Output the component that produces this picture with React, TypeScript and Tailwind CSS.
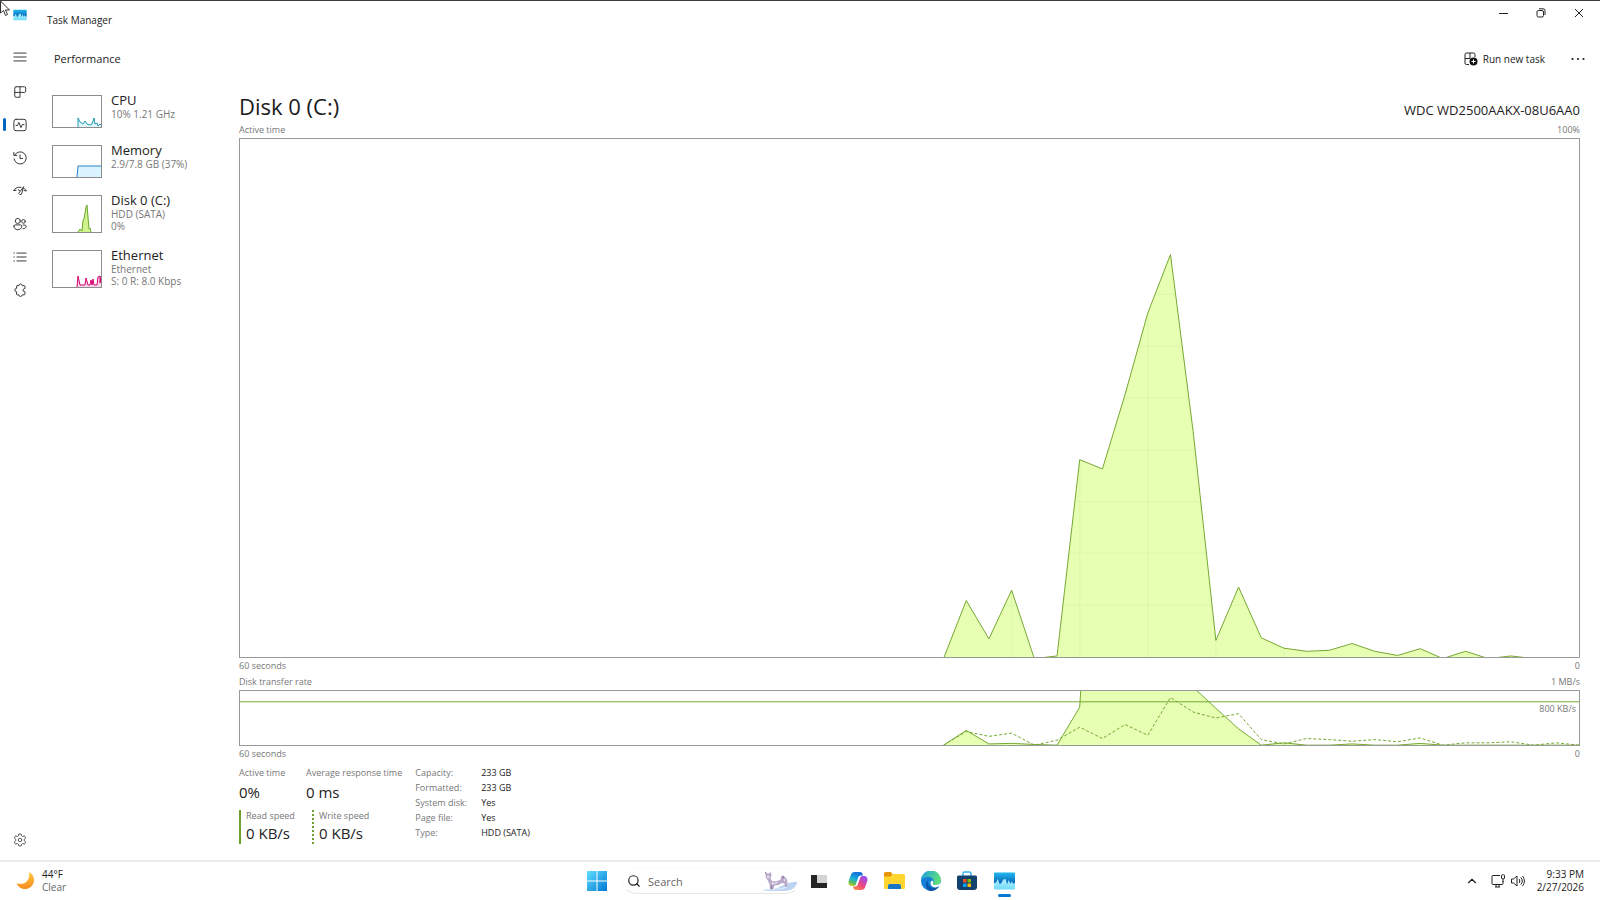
import { ChevronUp, Search } from "lucide-react";
import type { ReactNode } from "react";

// samples run from the oldest second (left) to the newest one (right)
const ACTIVE_TIME = [
  0, 10.9, 3.5, 12.9, 0, 0.2, 38.1, 36.3, 50.7, 66.4, 77.7, 43.5, 3.2, 13.5, 3.7, 1.7, 1.1, 1.3, 2.6, 1.1, 0.3, 1.6, 0,
  1.1, 0, 0.2, 0, 0, 0,
];
const READ_RATE = [
  0, 27, 2, 3, 1, 0, 70, 750, 900, 900, 600, 107, 68, 30, 0, 4, 0, 0, 2, 0, 0, 3, 0, 0, 0, 0, 0, 0, 0,
];
const WRITE_RATE = [
  0, 25, 16, 22, 0, 9, 33, 12, 38, 18, 88, 61, 50, 58, 10, 2, 12, 10, 7, 10, 6, 13, 0, 4, 4, 6, 0, 4, 0,
];

const GRID_ROWS = [10, 20, 30, 40, 50, 60, 70, 80, 90];
const GRID_COLUMNS = [31, 34, 37, 40, 43, 46];

// idle seconds go just below the frame so that no line is drawn for them
function toPoints(samples: number[]) {
  return samples.map((v, i) => `${59 - (samples.length - 1 - i)},${v === 0 ? 100.3 : 100 - v}`).join(" ");
}

function toArea(samples: number[]) {
  return `${60 - samples.length},101 ${toPoints(samples)} 59,101`;
}

interface AreaProps {
  samples: number[];
  dashed?: boolean;
  fill?: string;
}

function Area({ samples, dashed, fill = "#e6ffb3" }: AreaProps) {
  return (
    <>
      {!dashed && <polygon points={toArea(samples)} fill={fill} />}
      <polyline
        points={toPoints(samples)}
        fill="none"
        stroke="#76a832"
        strokeWidth="1"
        strokeDasharray={dashed ? "3 2" : undefined}
        vectorEffect="non-scaling-stroke"
      />
    </>
  );
}

function NavIcon({ children }: { children: ReactNode }) {
  return (
    <svg
      viewBox="0 0 16 16"
      className="h-[14px] w-[14px]"
      fill="none"
      stroke="currentColor"
      strokeWidth="1.1"
      strokeLinecap="round"
      strokeLinejoin="round"
    >
      {children}
    </svg>
  );
}

const NAV = [
  {
    label: "Processes",
    icon: (
      <path d="M3.500 2H13a1.500 1.500 0 0 1 1.500 1.500V7A1.500 1.500 0 0 1 13 8.500H2M8 2v12H3.500A1.500 1.500 0 0 1 2 12.500v-9A1.500 1.500 0 0 1 3.500 2" />
    ),
  },
  {
    label: "Performance",
    icon: (
      <>
        <rect x="1" y="1.500" width="14" height="13" rx="2.500" />
        <path d="M3.500 8.500h1.700L6.700 5l2.400 6 1.500-3.500h2" />
      </>
    ),
  },
  {
    label: "App history",
    icon: <path d="M2 4.500A7 7 0 1 1 1.200 9M1 1.500v3.500h3.500M8 4.500V8.500h3" />,
  },
  {
    label: "Startup apps",
    icon: (
      <path d="M1 7.500C2.500 4.500 5 3.300 9 3.800M1 7.500l2.500-.2M15 7.800c-.5-1.400-1.300-2.300-2.700-3M15 7.800l-2.300-.3M11.800 3.500L7.500 9.300a1.600 1.600 0 1 0 2.600 1.500zM6 6.500l1.500 1" />
    ),
  },
  {
    label: "Users",
    icon: (
      <>
        <circle cx="5.500" cy="4.500" r="2.900" />
        <circle cx="12" cy="5" r="2.100" />
        <path d="M1 10.500C1 9.700 1.700 9 2.500 9h6c.8 0 1.500.7 1.500 1.500 0 2.400-1.800 4-4.500 4s-4.500-1.600-4.500-4zM11.500 9.200h2c.8 0 1.500.6 1.500 1.400 0 1.800-1.300 2.800-3.500 2.800" />
      </>
    ),
  },
  {
    label: "Details",
    icon: <path d="M4.500 3.500H15M4.500 8H15M4.500 12.500H15M1 3.500h.6M1 8h.6M1 12.500h.6" />,
  },
  {
    label: "Services",
    icon: (
      <path d="M5 3h1.700a1.900 1.900 0 0 1 3.800 0h2.200a1 1 0 0 1 1 1v2.500h-.5a1.700 1.700 0 0 0 0 3.400h.5v2.600a1 1 0 0 1-1 1h-2.200a1.900 1.900 0 0 1-3.800 0H5a1 1 0 0 1-1-1V10a1.900 1.900 0 1 1 0-3.800V4a1 1 0 0 1 1-1z" />
    ),
  },
];

const DEVICES = [
  {
    name: "CPU",
    lines: ["10% 1.21 GHz"],
    stroke: "#1d9bb5",
    fill: "#e2f5f9",
    points: "26,32 26,23 28,27 31,29 33,26 35,29 38,30 40,29 42,23 43,29 45,28 46,31 48,29 49,30",
  },
  {
    name: "Memory",
    lines: ["2.9/7.8 GB (37%)"],
    stroke: "#2c80c4",
    fill: "#d9f4ff",
    points: "25,32 26,21 49,21",
  },
  {
    name: "Disk 0 (C:)",
    lines: ["HDD (SATA)", "0%"],
    stroke: "#69a82d",
    fill: "#d0f28c",
    points: "26,37 28,34 30,36 31,25 32,24 34,12 35,10 37,34 38,33 39,37",
  },
  {
    name: "Ethernet",
    lines: ["Ethernet", "S: 0 R: 8.0 Kbps"],
    stroke: "#d3006e",
    fill: "#fbd5e8",
    points: "25,37 26,26 28,35 32,35 33,35 34,28 36,35 38,35 39,30 40,35 41,29 42,35 45,35 46,27 48,26 48,33 49,26",
  },
];

const DETAILS = [
  ["Capacity:", "233 GB"],
  ["Formatted:", "233 GB"],
  ["System disk:", "Yes"],
  ["Page file:", "Yes"],
  ["Type:", "HDD (SATA)"],
];

function TaskManagerLogo({ className }: { className: string }) {
  return (
    <svg viewBox="0 0 20 18" className={className}>
      <defs>
        <linearGradient id="tm" x1="0" y1="0" x2="0" y2="1">
          <stop offset="0" stopColor="#22b8ee" />
          <stop offset="1" stopColor="#0560b6" />
        </linearGradient>
        <linearGradient id="tm-sky" x1="0" y1="0" x2="0" y2="1">
          <stop offset="0" stopColor="#e4fbff" />
          <stop offset="1" stopColor="#6fdcfa" />
        </linearGradient>
      </defs>
      <rect y="1" width="20" height="16" rx="1" fill="url(#tm-sky)" />
      <path
        d="M0 2a1 1 0 0 1 1-1h18a1 1 0 0 1 1 1v9l-1.500.5-1.500-2-1.500 2L14 8l-1.500 4-1.500-5L9 7.500 7 11l-1.500 1L3.500 7 2 10.500 0 11z"
        fill="url(#tm)"
      />
    </svg>
  );
}

function TitleBar() {
  return (
    <header className="flex h-9 items-start border-t border-[#3c3c3c] pr-[2px]">
      <TaskManagerLogo className="ml-[13px] mt-2 h-3 w-[14px]" />
      <h1 className="ml-5 mt-[11px] text-[10px] leading-4 text-[#222]">Task Manager</h1>
      <div className="ml-auto flex text-[#222]">
        <button aria-label="Minimize" className="flex h-6 w-[38px] items-center justify-center">
          <svg viewBox="0 0 10 10" className="h-[10px] w-[10px]" stroke="currentColor">
            <path d="M1 5.500h9" />
          </svg>
        </button>
        <button aria-label="Restore" className="flex h-6 w-[38px] items-center justify-center">
          <svg viewBox="0 0 10 10" className="h-[10px] w-[10px]" fill="none" stroke="currentColor">
            <rect x="1" y="2.500" width="6.500" height="6.500" rx="1.500" />
            <path d="M3 .8h4a2 2 0 0 1 2 2V7" />
          </svg>
        </button>
        <button aria-label="Close" className="flex h-6 w-[38px] items-center justify-center">
          <svg viewBox="0 0 10 10" className="h-[10px] w-[10px]" stroke="currentColor">
            <path d="M1 1l8 8M9 1L1 9" />
          </svg>
        </button>
      </div>
    </header>
  );
}

function NavRail() {
  return (
    <nav className="flex w-10 shrink-0 flex-col pt-[3px] text-[#333]">
      <button aria-label="Open navigation" className="flex h-9 items-center justify-center">
        <NavIcon>
          <path d="M1 3.500h14M1 8h14M1 12.500h14" />
        </NavIcon>
      </button>
      {NAV.map((item) => (
        <button
          key={item.label}
          aria-label={item.label}
          className="relative flex h-[33px] items-center justify-center"
        >
          {item.label === "Performance" && (
            <span className="absolute left-[3px] h-[13px] w-[3px] rounded-full bg-[#0067c0]" />
          )}
          <NavIcon>{item.icon}</NavIcon>
        </button>
      ))}
      <button aria-label="Settings" className="mt-auto flex h-10 items-center justify-center text-[#555]">
        <NavIcon>
          <circle cx="8" cy="8" r="2" />
          <path d="M6.700 1.200h2.600l.5 2 1.300.8 2-.7 1.400 2.300-1.500 1.500v1.800l1.500 1.500-1.400 2.300-2-.7-1.300.8-.5 2H6.700l-.5-2-1.300-.8-2 .7-1.400-2.300L3 8.900V7.100L1.500 5.600l1.400-2.300 2 .7 1.300-.8z" />
        </NavIcon>
      </button>
    </nav>
  );
}

function DeviceList() {
  return (
    <ul className="flex w-[199px] shrink-0 flex-col gap-[14px] pl-3 pt-[10px]">
      {DEVICES.map((d) => {
        const height = d.lines.length > 1 ? 38 : 33;
        return (
          <li key={d.name}>
            <button className="flex w-full items-start gap-[9px] text-left">
              <svg viewBox={`0 0 50 ${height}`} width="50" height={height} className="mt-[3px] shrink-0">
                <polygon points={`${d.points} 49,${height - 1}`} fill={d.fill} />
                <polyline points={d.points} fill="none" stroke={d.stroke} />
                <rect x=".5" y=".5" width="49" height={height - 1} fill="none" stroke="#8c8c8c" />
              </svg>
              <span className="flex flex-col">
                <span className="text-[13px] leading-4 text-[#222]">{d.name}</span>
                {d.lines.map((line) => (
                  <span key={line} className="text-[10px] leading-3 text-[#777]">
                    {line}
                  </span>
                ))}
              </span>
            </button>
          </li>
        );
      })}
    </ul>
  );
}

function ChartLabels({ left, right }: { left: string; right: string }) {
  return (
    <div className="flex justify-between text-[9px] leading-4 text-[#777]">
      <span>{left}</span>
      <span>{right}</span>
    </div>
  );
}

function ActiveTimeChart() {
  return (
    <div className="flex min-h-40 grow flex-col border border-[#999]">
      <svg viewBox="0 0 59 100" preserveAspectRatio="none" className="h-0 min-h-0 w-full grow">
        <clipPath id="active-area">
          <polygon points={toArea(ACTIVE_TIME)} />
        </clipPath>
        <Area samples={ACTIVE_TIME} />
        {/* the grid only shows through the filled part */}
        <g stroke="#76a832" strokeOpacity=".08" clipPath="url(#active-area)">
          {GRID_ROWS.map((y) => (
            <path key={y} d={`M0 ${y}H59`} vectorEffect="non-scaling-stroke" />
          ))}
          {GRID_COLUMNS.map((x) => (
            <path key={x} d={`M${x} 0V100`} vectorEffect="non-scaling-stroke" />
          ))}
        </g>
      </svg>
    </div>
  );
}

function TransferRateChart() {
  return (
    <div className="relative h-14 border border-[#999]">
      <svg viewBox="0 0 59 100" preserveAspectRatio="none" className="h-full w-full">
        <Area samples={READ_RATE} />
        <Area samples={WRITE_RATE} dashed />
        <path d="M0 20H59" stroke="#76a832" vectorEffect="non-scaling-stroke" />
      </svg>
      <span className="absolute right-[3px] top-3 text-[9px] leading-3 text-[#777]">800 KB/s</span>
    </div>
  );
}

function DiskPanel() {
  return (
    <section className="flex min-w-0 flex-1 flex-col pr-5">
      <div className="flex items-end justify-between pt-2">
        <h2 className="text-[22px] leading-8 text-[#1a1a1a]">Disk 0 (C:)</h2>
        <span className="text-[13px] leading-6 text-[#222]">WDC WD2500AAKX-08U6AA0</span>
      </div>
      <ChartLabels left="Active time" right="100%" />
      <ActiveTimeChart />
      <ChartLabels left="60 seconds" right="0" />
      <ChartLabels left="Disk transfer rate" right="1 MB/s" />
      <TransferRateChart />
      <ChartLabels left="60 seconds" right="0" />
      <DiskStats />
    </section>
  );
}

function DiskStats() {
  return (
    <div className="flex gap-[13px] pb-4 pt-[3px] text-[9px] text-[#777]">
      <div className="flex flex-col gap-[7px]">
        <div className="flex">
          <div className="w-[67px]">
            <p className="leading-4">Active time</p>
            <p className="text-[15px] leading-[22px] text-[#222]">0%</p>
          </div>
          <div>
            <p className="leading-4">Average response time</p>
            <p className="text-[15px] leading-[22px] text-[#222]">0 ms</p>
          </div>
        </div>
        <div className="flex">
          <div className="w-[73px] border-l-2 border-[#6f9f2c] pl-[5px]">
            <p className="leading-3">Read speed</p>
            <p className="text-[15px] leading-[22px] text-[#222]">0 KB/s</p>
          </div>
          <div className="border-l-2 border-dotted border-[#6f9f2c] pl-[5px]">
            <p className="leading-3">Write speed</p>
            <p className="text-[15px] leading-[22px] text-[#222]">0 KB/s</p>
          </div>
        </div>
      </div>
      <dl className="grid auto-rows-[15px] grid-cols-[66px_auto] content-start leading-4">
        {DETAILS.map(([label, value]) => (
          <div key={label} className="contents">
            <dt>{label}</dt>
            <dd className="text-[#222]">{value}</dd>
          </div>
        ))}
      </dl>
    </div>
  );
}

function Taskbar() {
  return (
    <footer className="grid h-10 grid-cols-[1fr_auto_1fr] items-center border-t-2 border-[#ececec] text-[10px] leading-[13px] text-[#222]">
      <button className="flex items-center gap-[6px] justify-self-start pl-4 text-left">
        <svg viewBox="0 0 20 20" className="h-5 w-5">
          <defs>
            <linearGradient id="moon" x1="0" y1="0" x2="0" y2="1">
              <stop offset="0" stopColor="#ffc83d" />
              <stop offset="1" stopColor="#f58a1f" />
            </linearGradient>
          </defs>
          <path d="M13 1a9 9 0 1 1-12.500 11C6 15 15 11 13 1z" fill="url(#moon)" />
        </svg>
        <span>
          <span className="block">44°F</span>
          <span className="block text-[#666]">Clear</span>
        </span>
      </button>

      <div className="flex items-center pl-[2px]">
        <button aria-label="Start">
          <svg viewBox="0 0 20 20" className="h-5 w-5">
            <defs>
              <linearGradient id="win" x1="0" y1="0" x2="1" y2="1">
                <stop offset="0" stopColor="#5fe0ff" />
                <stop offset="1" stopColor="#0078d4" />
              </linearGradient>
            </defs>
            <path d="M0 0h9.500v9.500H0zM10.500 0H20v9.500h-9.500zM0 10.500h9.500V20H0zM10.500 10.500H20V20h-9.500z" fill="url(#win)" />
          </svg>
        </button>
        <label className="ml-4 flex h-[26px] w-[176px] items-center rounded-full border border-[#fafafa] border-b-[#e6e6e6] pl-[3px]">
          <Search className="h-[14px] w-[14px] text-[#222]" strokeWidth={2} />
          <input
            aria-label="Search"
            placeholder="Search"
            className="ml-[7px] w-24 text-[11px] outline-none placeholder:text-[#666]"
          />
          <svg viewBox="0 0 36 20" className="ml-auto h-5 w-9 shrink-0">
            <path d="M1 19c5-2 9 0 14-2 6-2 8-5 20-6.500C35 15 31 20 22 20H4z" fill="#bcd3f2" />
            <path d="M3 19c6-1 14 0 22-3" fill="none" stroke="#e6f0fc" />
            <path
              d="M3 1l2.500 2.200L9 1l.5 3.500-1 3 2 3 5-.5 3-1.500 1-3.500 2-.5 3 3 1 3-.5 5.500h-2l-.5-3.500-3-.5-3 2-4 .5-1 3.500H8l-.5-5L5.500 9 4 7z"
              fill="#b9a9c8"
            />
            <path d="M5 4.500l2.500.5-.5 2.500-2-.5zM9 11l3 1 5-1.500-3 2.500-4 .5zM21 7.500l2.500 1-1 2.500z" fill="#e6dcef" />
            <path d="M3 1l2.500 2.200M20.500 5l1 3M9.500 18.500v-4" fill="none" stroke="#7e6a94" strokeWidth=".8" />
          </svg>
        </label>
        <button aria-label="Task view" className="ml-3">
          <svg viewBox="0 0 16 16" className="h-4 w-4">
            <path d="M0 2h6v8h10v5H0z" fill="#262626" />
            <path d="M6 2h10v8H6z" fill="#d4d4d4" />
          </svg>
        </button>
        <button aria-label="Copilot" className="ml-[21px]">
          <svg viewBox="0 0 20 20" className="h-5 w-5">
            <defs>
              <linearGradient id="cpa" x1=".4" y1="0" x2="0" y2="1">
                <stop offset="0" stopColor="#1672dc" />
                <stop offset=".45" stopColor="#19b3d8" />
                <stop offset=".75" stopColor="#6cc04a" />
                <stop offset="1" stopColor="#ffd21f" />
              </linearGradient>
              <linearGradient id="cpb" x1=".7" y1="0" x2="0" y2="1">
                <stop offset="0" stopColor="#9b4df0" />
                <stop offset=".5" stopColor="#f0467f" />
                <stop offset="1" stopColor="#ff9a3c" />
              </linearGradient>
            </defs>
            <path d="M6.500 1H12c2 0 2.500 1.500 3 3.500h-2c-1.500 0-2.300.8-2.800 2L8 13c-.5 1.500-1.300 2-3 2H4c-3 0-4-2.500-3.200-5.500L3 3.500C3.500 2 4.700 1 6.500 1z" fill="url(#cpa)" />
            <path d="M13.500 19H8c-2 0-2.500-1.500-3-3.500h2c1.500 0 2.300-.8 2.800-2L12 7c.5-1.500 1.300-2 3-2h1c3 0 4 2.500 3.200 5.500L17 16.500c-.5 1.500-1.700 2.500-3.500 2.500z" fill="url(#cpb)" />
            <path d="M10.500 7h1.300l-2.200 6.500H8.200z" fill="#fff" />
          </svg>
        </button>
        <button aria-label="File Explorer" className="ml-4">
          <svg viewBox="0 0 21 20" className="h-5 w-[21px]">
            <path d="M0 2.500A1.500 1.500 0 0 1 1.500 1H7l2 3-2 2H0z" fill="#e8930c" />
            <path d="M0 5.500h6.500L9 3h10.500A1.500 1.500 0 0 1 21 4.500v12a1.500 1.500 0 0 1-1.500 1.500h-18A1.500 1.500 0 0 1 0 16.500z" fill="#ffd52e" />
            <path d="M4 18v-3a2 2 0 0 1 2-2h9a2 2 0 0 1 2 2v3z" fill="#1976c5" />
          </svg>
        </button>
        <button aria-label="Edge" className="ml-4">
          <svg viewBox="0 0 20 20" className="h-5 w-5">
            <defs>
              <linearGradient id="edge" x1="0" y1="0" x2="1" y2=".3">
                <stop offset="0" stopColor="#1b9de2" />
                <stop offset="1" stopColor="#5fe07c" />
              </linearGradient>
            </defs>
            <circle cx="10" cy="10" r="10" fill="#1680d8" />
            <path d="M0 10a10 10 0 0 1 20-1c0 4-3 5-5.500 5-2 0-3.500-.8-2.500-2 2-3-1-6-4.500-6C4 6 1 7 0 10z" fill="url(#edge)" />
            <path d="M7 10c-1 5 4 8.500 10.500 6A10 10 0 0 1 8 19.800C4 17 4 11 8 8.500z" fill="#0d56aa" />
            <path d="M12 12c-1 1.200.5 2 2.500 2 2 0 4-.8 5.500-2.500.3 1-.5 2.500-1.300 3.500-4 2.500-8.500 1.500-9-2A3 3 0 0 1 11 9.500c1 .5 1.500 1.500 1 2.500z" fill="#fff" />
          </svg>
        </button>
        <button aria-label="Microsoft Store" className="ml-4">
          <svg viewBox="0 0 20 20" className="h-5 w-5">
            <path d="M6 5V2.500A1.500 1.500 0 0 1 7.500 1h5A1.500 1.500 0 0 1 14 2.500V5" fill="none" stroke="#36b4ec" strokeWidth="1.500" />
            <path d="M1.500 4.500h17A1.500 1.500 0 0 1 20 6v10a3 3 0 0 1-3 3H3a3 3 0 0 1-3-3V6a1.500 1.500 0 0 1 1.500-1.500z" fill="#12406f" />
            <path d="M6 8h3.500v3.500H6z" fill="#f25022" />
            <path d="M10.500 8H14v3.500h-3.500z" fill="#7fba00" />
            <path d="M6 12.500h3.500V16H6z" fill="#00a4ef" />
            <path d="M10.500 12.500H14V16h-3.500z" fill="#ffb900" />
          </svg>
        </button>
        <button aria-label="Task Manager" className="relative ml-[17px]">
          <TaskManagerLogo className="h-5 w-[21px]" />
          <span className="absolute -bottom-[6px] left-1 h-[3px] w-[13px] rounded-full bg-[#0078d4]" />
        </button>
      </div>

      <div className="flex items-center justify-self-end pr-4">
        <button aria-label="Show hidden icons">
          <ChevronUp className="h-[14px] w-[14px]" />
        </button>
        <button aria-label="Network and volume" className="ml-3 flex items-center gap-[6px]">
          <svg viewBox="0 0 14 14" className="h-[14px] w-[14px]" fill="none" stroke="currentColor">
            <path d="M9 1.500H2a1 1 0 0 0-1 1v7a1 1 0 0 0 1 1h9a1 1 0 0 0 1-1V7M4 13h5M5 10.500V13M8 10.500V13" />
            <rect x="10.500" y=".8" width="3" height="4" rx=".8" />
            <path d="M12 5v3" />
          </svg>
          <svg viewBox="0 0 14 14" className="h-[14px] w-[14px]" fill="none" stroke="currentColor">
            <path d="M.5 5h2L6 2v10L2.500 9h-2zM8 5c1 1 1 3 0 4M9.800 3.500c2 2 2 5 0 7M11.500 2c2.500 3 2.500 7 0 10" />
          </svg>
        </button>
        <button className="ml-3 text-right">
          <span className="block">9:33 PM</span>
          <span className="block">2/27/2026</span>
        </button>
      </div>
    </footer>
  );
}

export default function App() {
  return (
    <div className="relative flex min-h-screen flex-col bg-white font-['Open_Sans','Noto_Sans',sans-serif]">
      <TitleBar />
      <div className="flex grow">
        <NavRail />
        <main className="flex min-w-0 flex-1 flex-col">
          <div className="flex h-[46px] items-center pl-[14px] pr-[15px]">
            <h2 className="text-[11px] font-medium text-[#222]">Performance</h2>
            <button className="ml-auto flex items-center gap-[5px] text-[10px] text-[#222]">
              <svg viewBox="0 0 14 14" className="h-[14px] w-[14px]" fill="none" stroke="currentColor">
                <path d="M5 12.500H2.500a1.500 1.500 0 0 1-1.500-1.500V2.500A1.500 1.500 0 0 1 2.500 1h7A1.500 1.500 0 0 1 11 2.500V5M1 6.500h5M6 1v5.500" />
                <circle cx="9.500" cy="9.500" r="4" fill="#111" stroke="none" />
                <path d="M9.500 7.500v4M7.500 9.500h4" stroke="#fff" />
              </svg>
              Run new task
            </button>
            <button aria-label="More options" className="ml-[26px]">
              <svg viewBox="0 0 14 4" className="h-1 w-[14px]" fill="#222">
                <circle cx="1.500" cy="2" r="1.100" />
                <circle cx="7" cy="2" r="1.100" />
                <circle cx="12.500" cy="2" r="1.100" />
              </svg>
            </button>
          </div>
          <div className="flex grow">
            <DeviceList />
            <DiskPanel />
          </div>
        </main>
      </div>
      <Taskbar />
      <svg viewBox="0 0 10 16" className="absolute left-0 top-0 h-4 w-[10px]">
        <path d="M.5 1v12l3-2.500 2 5 2-1-2-4.500h4z" fill="#fff" stroke="#333" />
      </svg>
    </div>
  );
}
